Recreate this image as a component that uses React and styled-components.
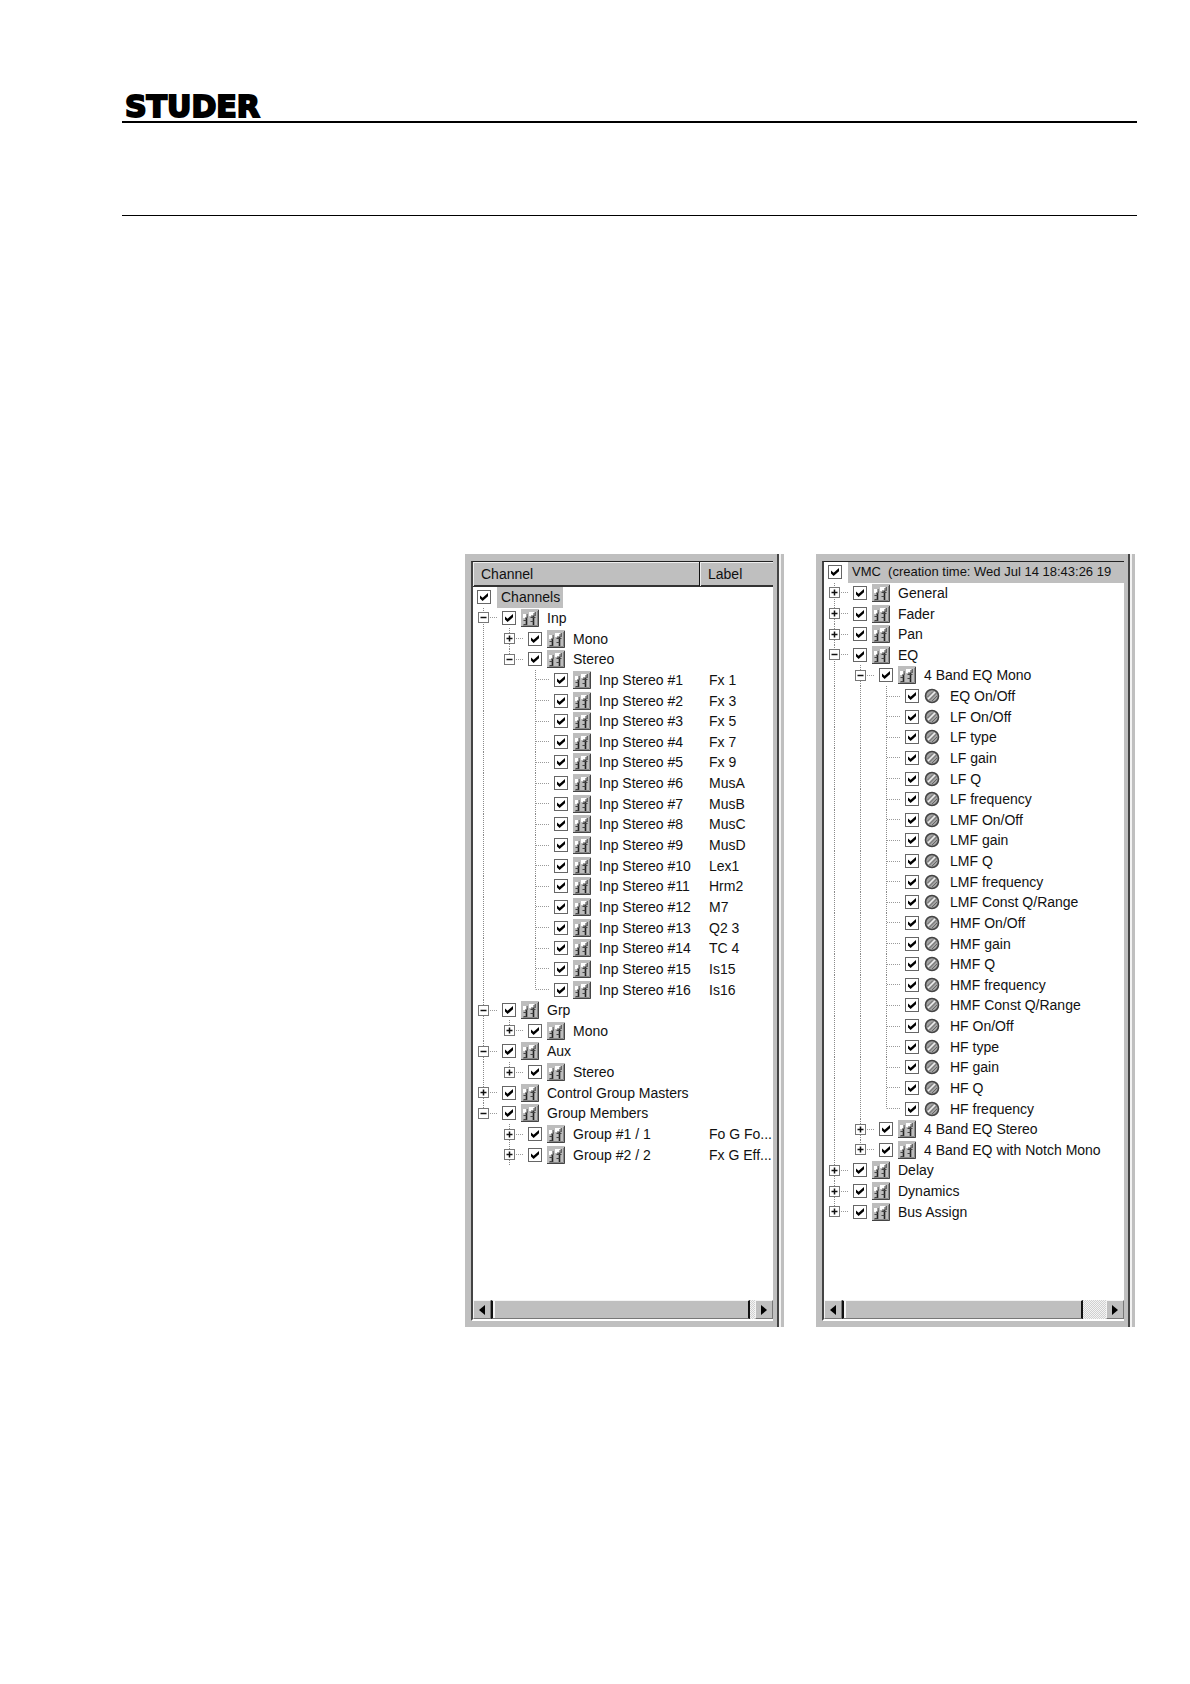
import React from "react";
import styled, { createGlobalStyle, css } from "styled-components";

const GlobalStyle = createGlobalStyle`
  * { box-sizing: border-box; }
  body { margin: 0; background: #fff; color: #111; font: 14px/20px "Liberation Sans", Arial, sans-serif; }
`;

const Page = styled.main`
  padding: 92px 53px 356px 122px;
`;

const Masthead = styled.header`
  height: 31px;
  padding-left: 3px;
  border-bottom: 2px solid #000;
`;

const Logo = styled.h1`
  margin: 0;
  font: bold 30px/30px "DejaVu Sans", Verdana, sans-serif;
  color: #000;
  -webkit-text-stroke: 2px #000;
`;

const Rule = styled.hr`
  margin: 92px 0 338px;
  border: 0;
  border-top: 1px solid #000;
`;

const Panels = styled.div`
  display: grid;
  grid-template-columns: 1fr 1fr;
  gap: 32px;
  padding: 0 2px 0 343px;
`;

const Panel = styled.section`
  display: flex;
  min-width: 0;
  padding: 7px 0 6px 6px;
  background: #bfbfbf;
`;

const Well = styled.div`
  flex: 1;
  min-width: 0;
  display: flex;
  flex-direction: column;
  border: solid #fff;
  border-width: 1px 0 2px 2px;
  border-top-color: #222;
  border-left-color: #444;
  background: #fff;
`;

const Edge = styled.div`
  width: 11px;
  margin: -7px 0 -6px;
  border: solid #fff;
  border-width: 0 3px 0 2px;
  border-color: #d8d8d8 #bfbfbf;
  background: linear-gradient(90deg, #bfbfbf 0 2px, #444 2px 4px, #f2f2f2 4px 6px);
`;

const HeadRow = styled.div`
  display: grid;
  grid-template-columns: minmax(0, 1fr) 73px;
  height: 25px;
  background: #bfbfbf;
  border-bottom: 2px solid #333;
`;

const HeadCell = styled.div`
  padding: 0 7px;
  line-height: 23px;
  border-top: 1px solid #eee;
  border-left: 1px solid #eee;
  & + & { box-shadow: -1px 0 #111; }
`;

const Tree = styled.ul`
  flex: none;
  display: grid;
  grid-auto-rows: minmax(0, 1fr);
  height: ${(p) => p.$height}px;
  margin: 0 0 78px;
  padding: 0;
  list-style: none;
`;

const Row = styled.li`
  display: flex;
  align-items: center;
  min-width: 0;
  white-space: nowrap;
  padding-left: ${(p) => (p.$root ? 4 : 0)}px;
`;

const vertical = "repeating-linear-gradient(#8a8a8a 0 1px, transparent 1px 2px)";
const horizontal = "repeating-linear-gradient(90deg, #9a9a9a 0 1px, transparent 1px 2px)";

const Guide = styled.span`
  flex: none;
  align-self: stretch;
  display: flex;
  align-items: center;
  width: 26px;
  padding-left: 5px;
  background-repeat: no-repeat;
  ${(p) => p.$kind === "through" && css`
    background-image: ${vertical};
    background-position: 10px 0;
    background-size: 1px 100%;
  `}
  ${(p) => (p.$kind === "branch" || p.$kind === "last") && css`
    background-image: ${vertical}, ${horizontal};
    background-position: 10px 0, 11px 50%;
    background-size: 1px ${p.$kind === "last" ? "50%" : "100%"}, 13px 1px;
  `}
`;

const Expander = styled.button`
  width: 11px;
  height: 11px;
  padding: 0;
  border: 1px solid #777;
  background: #fff;
  display: grid;
  place-items: center;
`;

const Tick = styled.label`
  flex: none;
  display: grid;
  width: 14px;
  height: 14px;
  margin-left: ${(p) => (p.$root ? 0 : 3)}px;
  > * { grid-area: 1 / 1; }
  > svg { pointer-events: none; visibility: hidden; }
  > input:checked + svg { visibility: visible; }
`;

const Box = styled.input`
  appearance: none;
  width: 14px;
  height: 14px;
  margin: 0;
  border: 1px solid #666;
  background: #fff;
`;

const IconSlot = styled.span`
  flex: none;
  display: flex;
  width: 18px;
  margin-left: 5px;
`;

const Name = styled.span`
  flex: 1;
  min-width: 0;
  overflow: hidden;
  padding-left: 8px;
`;

const RootName = styled.span`
  flex: ${(p) => (p.$fill ? "1" : "none")};
  align-self: stretch;
  min-width: 0;
  overflow: hidden;
  margin-left: 6px;
  padding: 0 ${(p) => (p.$fill ? 0 : 3)}px 0 4px;
  font-size: ${(p) => (p.$fill ? 13 : 14)}px;
  background: #bfbfbf;
`;

const Tag = styled.span`
  flex: none;
  width: 64px;
`;

const ScrollBar = styled.div`
  display: flex;
  height: 19px;
  margin-top: auto;
  background: repeating-conic-gradient(#d0d0d0 0 25%, #f4f4f4 0 50%) 0 0 / 2px 2px;
`;

const raised = css`
  border: solid;
  border-width: 1px;
  border-color: #f4f4f4 #777 #777 #f4f4f4;
  background: #bfbfbf;
`;

const Arrow = styled.button`
  ${raised}
  flex: none;
  width: 18px;
  padding: 0;
  display: grid;
  place-items: center;
`;

const Thumb = styled.div`
  ${raised}
  flex: 1;
  border-right: 2px solid #111;
  border-left: 2px solid #111;
  box-shadow: inset 2px 0 #f4f4f4;
  margin-right: ${(p) => p.$rest}px;
`;

const PlusMinus = ({ open }) => (
  <svg width="9" height="9" viewBox="0 0 9 9" stroke="#111" strokeWidth="1.5">
    <path d={open ? "M1.500 4.500h6" : "M1.500 4.500h6M4.500 1.500v6"} />
  </svg>
);

const CheckMark = () => (
  <svg width="14" height="14" viewBox="0 0 14 14">
    <path d="M3 5.4 5.6 7.7 11 3v3.2L5.6 11 3 8.6z" fill="#000" />
  </svg>
);

const FaderIcon = () => (
  <svg width="18" height="18" viewBox="0 0 18 18">
    <path d="M0 0h18v18H0z" fill="#bdbdbd" />
    <path d="M0 17.500h17.500V1" fill="none" stroke="#444" />
    <path d="M16.500 2v14.500H2" fill="none" stroke="#888" />
    <path d="M5.500 7v9M12.500 6v10" fill="none" stroke="#222" strokeWidth="1.6" />
    <path d="M8.500 3v4M14.500 3v4" stroke="#666" />
    <path d="M2.500 11.500h3M2.500 15.500h3M9.500 8.500h5M9.500 12.500h3" stroke="#444" />
    <path d="M2 5h4v4H2zM8 3h5v4H8z" fill="#fff" />
    <path d="M6 5v4H4M13 4v3h-3" fill="none" stroke="#444" />
  </svg>
);

const KnobIcon = () => (
  <svg width="16" height="16" viewBox="0 0 16 16">
    <circle cx="8" cy="8" r="6.500" fill="#a4a4a4" stroke="#444" strokeWidth="1.6" />
    <path d="M4 11 11 4" stroke="#eee" strokeWidth="1.500" />
    <path d="M3.500 9 9 3.500M5 12.500 12.500 5M8 13l5-5" stroke="#666" />
  </svg>
);

const ArrowGlyph = ({ right }) => (
  <svg width="8" height="10" viewBox="0 0 8 10">
    <path d={right ? "M1 0v10l6-5z" : "M7 0v10L1 5z"} fill="#000" />
  </svg>
);

const inputs = ["Fx 1", "Fx 3", "Fx 5", "Fx 7", "Fx 9", "MusA", "MusB", "MusC", "MusD", "Lex1", "Hrm2", "M7", "Q2 3", "TC 4", "Is15", "Is16"];

const channels = [
  { name: "Inp", kids: [
    { name: "Mono" },
    { name: "Stereo", kids: inputs.map((tag, i) => ({ name: `Inp Stereo #${i + 1}`, tag, leaf: true })) },
  ] },
  { name: "Grp", kids: [{ name: "Mono" }] },
  { name: "Aux", kids: [{ name: "Stereo" }] },
  { name: "Control Group Masters" },
  { name: "Group Members", kids: [
    { name: "Group #1 / 1", tag: "Fo G Fo..." },
    { name: "Group #2 / 2", tag: "Fx G Eff...", more: true },
  ] },
];

const params = [
  "EQ On/Off", "LF On/Off", "LF type", "LF gain", "LF Q", "LF frequency",
  "LMF On/Off", "LMF gain", "LMF Q", "LMF frequency", "LMF Const Q/Range",
  "HMF On/Off", "HMF gain", "HMF Q", "HMF frequency", "HMF Const Q/Range",
  "HF On/Off", "HF type", "HF gain", "HF Q", "HF frequency",
];

const snapshot = [
  { name: "General" },
  { name: "Fader" },
  { name: "Pan" },
  { name: "EQ", kids: [
    { name: "4 Band EQ Mono", kids: params.map((name) => ({ name, leaf: true, knob: true })) },
    { name: "4 Band EQ Stereo" },
    { name: "4 Band EQ with Notch Mono" },
  ] },
  { name: "Delay" },
  { name: "Dynamics" },
  { name: "Bus Assign" },
];

const flatten = (nodes, trail = []) =>
  nodes.flatMap((node, i) => {
    const last = i === nodes.length - 1 && !node.more;
    return [
      { ...node, trail, last },
      ...flatten(node.kids || [], [...trail, last ? "none" : "through"]),
    ];
  });

const Check = ({ name, root }) => (
  <Tick $root={root}>
    <Box type="checkbox" defaultChecked aria-label={name} />
    <CheckMark />
  </Tick>
);

const TreeView = ({ root, fill, nodes, height }) => (
  <Tree $height={height}>
    <Row $root>
      <Check name={root} root />
      <RootName $fill={fill}>{root}</RootName>
    </Row>
    {flatten(nodes).map((n, i) => (
      <Row key={i}>
        {n.trail.map((kind, j) => <Guide key={j} $kind={kind} />)}
        <Guide $kind={n.last ? "last" : "branch"}>
          {!n.leaf && (
            <Expander type="button" aria-label={`Toggle ${n.name}`} aria-expanded={!!n.kids}>
              <PlusMinus open={!!n.kids} />
            </Expander>
          )}
        </Guide>
        <Check name={n.name} />
        <IconSlot>{n.knob ? <KnobIcon /> : <FaderIcon />}</IconSlot>
        <Name>{n.name}</Name>
        {n.tag && <Tag>{n.tag}</Tag>}
      </Row>
    ))}
  </Tree>
);

const Scroller = ({ rest }) => (
  <ScrollBar>
    <Arrow type="button" aria-label="Scroll left"><ArrowGlyph /></Arrow>
    <Thumb $rest={rest} />
    <Arrow type="button" aria-label="Scroll right"><ArrowGlyph right /></Arrow>
  </ScrollBar>
);

export default function App() {
  return (
    <>
      <GlobalStyle />
      <Page>
        <Masthead><Logo>STUDER</Logo></Masthead>
        <Rule />
        <Panels>
          <Panel>
            <Well>
              <HeadRow>
                <HeadCell>Channel</HeadCell>
                <HeadCell>Label</HeadCell>
              </HeadRow>
              <TreeView root="Channels" nodes={channels} height={578} />
              <Scroller rest={5} />
            </Well>
            <Edge />
          </Panel>
          <Panel>
            <Well>
              <TreeView root={"VMC\u00a0 (creation time: Wed Jul 14 18:43:26 19"} fill nodes={snapshot} height={660} />
              <Scroller rest={23} />
            </Well>
            <Edge />
          </Panel>
        </Panels>
      </Page>
    </>
  );
}
